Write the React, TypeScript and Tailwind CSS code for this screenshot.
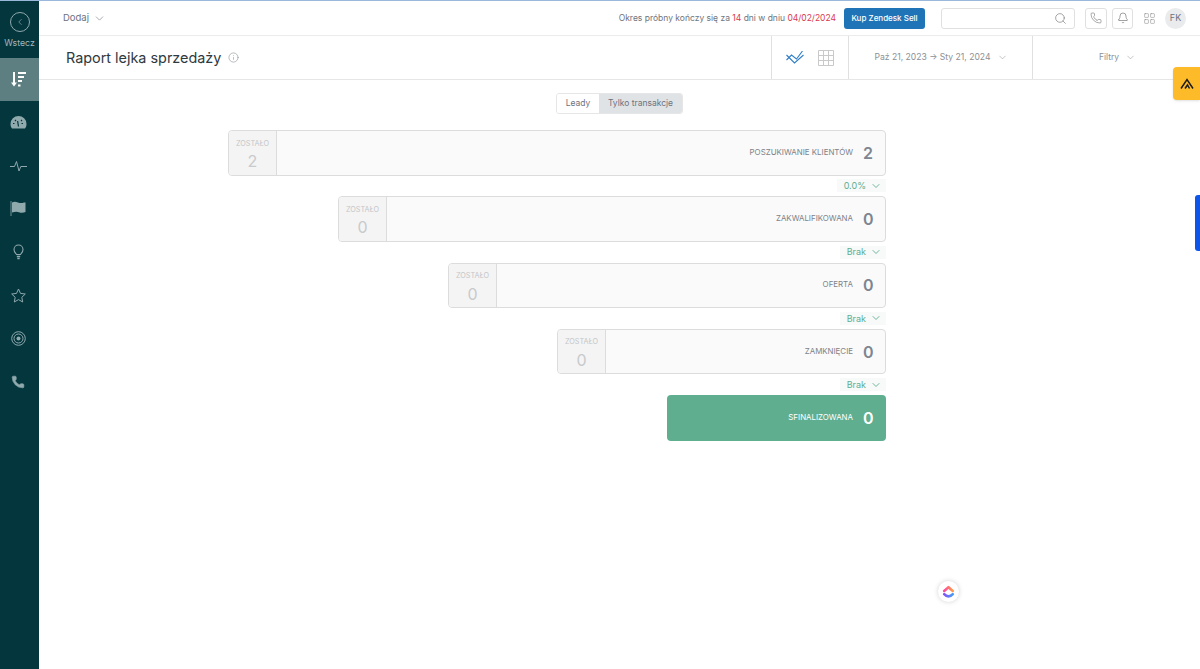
import React from "react";
import { ChevronDown, ChevronLeft, Search, Phone, Bell, Info, LayoutGrid } from "lucide-react";

const Nav = ({ children }: { children: React.ReactNode }) => (
  <div className="h-[43.2px] flex items-center justify-center pr-[3px]">{children}</div>
);

const Stage = ({ label, value, pct, left }: { label: string; value: string; pct?: string; left: string }) => (
  <>
    <div className="w-full h-[45.5px] flex rounded-[4px] border border-[#dcdcdc] bg-[#fafafa] overflow-hidden">
      <div className="w-[48px] shrink-0 bg-[#f4f4f4] border-r border-[#dcdcdc] flex flex-col items-center pt-[7.5px]">
        <span className="text-[7.25px] leading-[10px] text-[#c4c6c8]">ZOSTAŁO</span>
        <span className="text-[16px] leading-[20px] mt-[2.5px] text-[#c8cacc]">{left}</span>
      </div>
      <div className="flex-1 flex items-center justify-end pr-[12px]">
        <span className="text-[7.9px] text-[#7d8288] mr-[10px]">{label}</span>
        <span className="text-[16px] font-semibold text-[#7c8591] w-[10px] text-center">{value}</span>
      </div>
    </div>
    {pct && (
      <div className="h-[20.75px] flex items-center justify-end">
        <div className="h-[13px] flex items-center gap-[4px] bg-[#f8f9f9] pl-[7px] pr-[4px] text-[9px] text-[#5fae90]">
          <span>{pct}</span>
          <ChevronDown size={12} strokeWidth={1.8} />
        </div>
      </div>
    )}
  </>
);

function Star() {
  return (
    <svg width="15" height="15" viewBox="0 0 15 15" fill="none" stroke="#8fa9ad" strokeWidth="1">
      <path d="M7.500 1l2 4.400 4.800.6-3.500 3.300.9 4.700-4.200-2.400-4.200 2.400.9-4.700L.7 6l4.800-.6z" />
    </svg>
  );
}

export default function App() {
  return (
    <div className="w-[1200px] h-[669px] flex bg-white overflow-hidden relative font-['Inter','Liberation_Sans',sans-serif] border-t border-[#9ab8dc]">
      <aside className="w-[39px] shrink-0 bg-[#03363d] flex flex-col">
        <div className="h-[57px] flex flex-col items-center pt-[11px]">
          <div className="w-[20px] h-[20px] rounded-full border border-[#8fa9ad] flex items-center justify-center text-[#9fb5b8]">
            <ChevronLeft size={10} strokeWidth={1.5} />
          </div>
          <span className="text-[8.75px] leading-[10px] mt-[6px] text-[#a3b7ba]">Wstecz</span>
        </div>
        <div className="h-[43px] bg-[#5d7f82] flex items-center justify-center pr-[3px]">
          <svg width="17" height="17" viewBox="0 0 17 17" fill="none">
            <path d="M4 1v12" stroke="#fff" strokeWidth="2" />
            <path d="M1 11.500h6L4 15.500z" fill="#fff" />
            <path d="M8 2h8M8 6h6M8 10h4" stroke="#fff" strokeWidth="2" />
            <path d="M8 14.500h2.500" stroke="#fff" strokeWidth="2" />
          </svg>
        </div>
        <Nav>
          <svg width="17" height="15" viewBox="0 0 17 14" fill="#8fa9ad">
            <path d="M8.500 0.500A8 8 0 0 0 .5 8.500c0 1.800.5 3.300 1.500 4.500h13c1-1.200 1.500-2.700 1.500-4.500a8 8 0 0 0-8-8z" />
            <path d="M8.500 11L7.600 5.500M3 8h1.500M13 8h-1.500M5 4.500l1 1M12 4.500l-1 1" stroke="#03363d" strokeWidth="1.200" />
          </svg>
        </Nav>
        <Nav>
          <svg width="17" height="12" viewBox="0 0 17 12" fill="none" stroke="#8fa9ad" strokeWidth="1">
            <path d="M0 6.500h4.500L6.500 1.500 9 11l1.800-4.500H17" />
          </svg>
        </Nav>
        <Nav>
          <svg width="16" height="15" viewBox="0 0 16 15" fill="#8fa9ad">
            <path d="M.6 0h.8v15H.6z" />
            <path d="M2 1.500c2-1 4-.8 6 0s4 .8 6 0h1.500v9.500c-2 1-4.500 1-6.500.2s-4-.7-7 .3z" />
          </svg>
        </Nav>
        <Nav>
          <svg width="11" height="16" viewBox="0 0 11 16" fill="none" stroke="#8fa9ad" strokeWidth="1.100">
            <path d="M3.500 10.500C2.500 9 1 8 1 5.500a4.500 4.500 0 0 1 9 0c0 2.500-1.500 3.500-2.500 5z" />
            <path d="M3.800 12.500h3.400M4.300 14.500h2.400" strokeWidth="1.500" />
          </svg>
        </Nav>
        <Nav>
          <Star />
        </Nav>
        <Nav>
          <svg width="15" height="15" viewBox="0 0 15 15" fill="none" stroke="#8fa9ad">
            <circle cx="7.500" cy="7.500" r="6.800" strokeWidth="1" />
            <circle cx="7.500" cy="7.500" r="4.500" strokeWidth="1" />
            <circle cx="7.500" cy="7.500" r="2" fill="#8fa9ad" strokeWidth="0" />
          </svg>
        </Nav>
        <Nav>
          <Phone size={14} fill="#8fa9ad" strokeWidth={1} className="text-[#8fa9ad]" />
        </Nav>
      </aside>

      <main className="flex-1 min-w-0 flex flex-col">
        <header className="h-[35px] shrink-0 border-b border-[#ececec] flex items-center pl-[24px] pr-[14px]">
          <span className="text-[9.5px] text-[#6c7280]">Dodaj</span>
          <ChevronDown size={13} strokeWidth={1.100} className="ml-[4px] text-[#6c7280]" />
          <div className="ml-auto text-[8.5px] text-[#6f747c]">
            Okres próbny kończy się za <span className="text-[#d9394e]">14</span> dni w dniu <span className="text-[#d9394e]">04/02/2024</span>
          </div>
          <button className="ml-[8px] h-[21px] w-[81px] rounded-[3px] bg-[#1f73b7] text-white text-[8px] font-medium">Kup Zendesk Sell</button>
          <div className="ml-[16px] w-[134px] h-[21px] rounded-[3px] border border-[#e0e0e0] flex items-center justify-end pr-[7px]">
            <Search size={13} strokeWidth={1.200} className="text-[#777]" />
          </div>
          <div className="ml-[10px] w-[22px] h-[21px] rounded-[3px] border border-[#e0e0e0] flex items-center justify-center">
            <Phone size={12} strokeWidth={1.100} className="text-[#666]" />
          </div>
          <div className="ml-[5px] w-[21px] h-[21px] rounded-[3px] border border-[#e0e0e0] flex items-center justify-center">
            <Bell size={12} strokeWidth={1.100} className="text-[#555]" />
          </div>
          <LayoutGrid size={13} strokeWidth={1} className="ml-[10px] text-[#888]" />
          <div className="ml-[9px] w-[21px] h-[21px] rounded-full bg-[#e9ebed] flex items-center justify-center text-[9px] text-[#6c7280]">FK</div>
        </header>

        <div className="h-[44px] shrink-0 border-b border-[#e6e6e6] flex items-stretch">
          <div className="flex-1 flex items-center pl-[27px]">
            <h1 className="text-[14.4px] text-[#2f3941]">Raport lejka sprzedaży</h1>
            <Info size={11} strokeWidth={1.200} className="ml-[7px] text-[#808890]" />
          </div>
          <div className="w-[77px] border-l border-[#e0e0e0] flex items-center justify-center gap-[14px] pr-[1px]">
            <svg width="18" height="13" viewBox="0 0 17 13" fill="none" stroke="#2f7fc8" strokeWidth="1.100">
              <path d="M0 4l8 8 9-8" />
              <path d="M0 9l5-5 5 4 6-8" />
            </svg>
            <svg width="16" height="16" viewBox="0 0 16 16" fill="none" stroke="#c9c9c9" strokeWidth="1">
              <path d="M.5.500h15v15H.5zM.5 5.500h15M.5 10.500h15M5.500.500v15M10.500.500v15" />
            </svg>
          </div>
          <div className="w-[184px] border-l border-[#e0e0e0] flex items-center justify-center pl-[1px] text-[8.6px] text-[#8b9096]">
            <span>Paź 21, 2023 → Sty 21, 2024</span>
            <ChevronDown size={11} strokeWidth={1.100} className="ml-[6px]" />
          </div>
          <div className="w-[168px] border-l border-[#e0e0e0] flex items-center justify-center pl-[2px] text-[8.5px] text-[#8b9096]">
            <span>Filtry</span>
            <ChevronDown size={11} strokeWidth={1.100} className="ml-[6px]" />
          </div>
        </div>

        <div className="flex justify-center pt-[13px]">
          <div className="flex h-[21px] rounded-[3px] border border-[#e6e6e6] overflow-hidden text-[8.5px] text-[#6c7280]">
            <div className="w-[42px] flex items-center justify-center bg-white">Leady</div>
            <div className="w-[83px] flex items-center justify-center bg-[#e0e3e6]">Tylko transakcje</div>
          </div>
        </div>

        <section className="flex flex-col pt-[16px] pl-[189px] pr-[314px]">
          <div className="flex flex-col items-end">
            <div className="w-[658px]"><Stage label="POSZUKIWANIE KLIENTÓW" value="2" pct="0.0%" left="2" /></div>
            <div className="w-[548px]"><Stage label="ZAKWALIFIKOWANA" value="0" pct="Brak" left="0" /></div>
            <div className="w-[438px]"><Stage label="OFERTA" value="0" pct="Brak" left="0" /></div>
            <div className="w-[329px]"><Stage label="ZAMKNIĘCIE" value="0" pct="Brak" left="0" /></div>
            <div className="w-[219px] h-[45.5px] rounded-[4px] bg-[#5fae90] flex items-center justify-end pr-[13px]">
              <span className="text-[7.9px] text-white mr-[10px]">SFINALIZOWANA</span>
              <span className="text-[16px] font-semibold text-white w-[10px] text-center">0</span>
            </div>
          </div>
        </section>
      </main>

      <div className="absolute right-0 top-[66px] w-[27px] h-[33px] bg-[#fdbb2a] rounded-l-[4px] shadow-sm flex items-center justify-center">
        <svg width="14" height="11" viewBox="0 0 14 11" fill="none" stroke="#1c1c1c" strokeWidth="1.500">
          <path d="M1 10.500L7 1.500l6 9" />
          <path d="M5 10.500l2.500-3.500 2 3.500" />
        </svg>
      </div>
      <div className="absolute right-0 top-[194px] w-[5px] h-[56px] bg-[#0f56e8] rounded-l-[3px]" />
      <div className="absolute left-[938px] top-[580px] w-[21px] h-[21px] rounded-full bg-white shadow-[0_0_5px_rgba(0,0,0,0.18)] flex items-center justify-center">
        <svg width="13" height="14" viewBox="0 0 12 13" fill="none" strokeWidth="2.400" strokeLinecap="round" strokeLinejoin="round">
          <defs>
            <linearGradient id="a" gradientUnits="userSpaceOnUse" x1="1" y1="0" x2="11" y2="0"><stop offset="0" stopColor="#ff3fa8" /><stop offset="1" stopColor="#ffa53c" /></linearGradient>
            <linearGradient id="b" gradientUnits="userSpaceOnUse" x1="1" y1="0" x2="11" y2="0"><stop offset="0" stopColor="#8b4cf6" /><stop offset="1" stopColor="#3fa5f5" /></linearGradient>
          </defs>
          <path d="M2 5.500L6 2l4 3.500" stroke="url(#a)" />
          <path d="M2 8.500c2.500 2.800 5.500 2.800 8 0" stroke="url(#b)" />
        </svg>
      </div>
    </div>
  );
}
